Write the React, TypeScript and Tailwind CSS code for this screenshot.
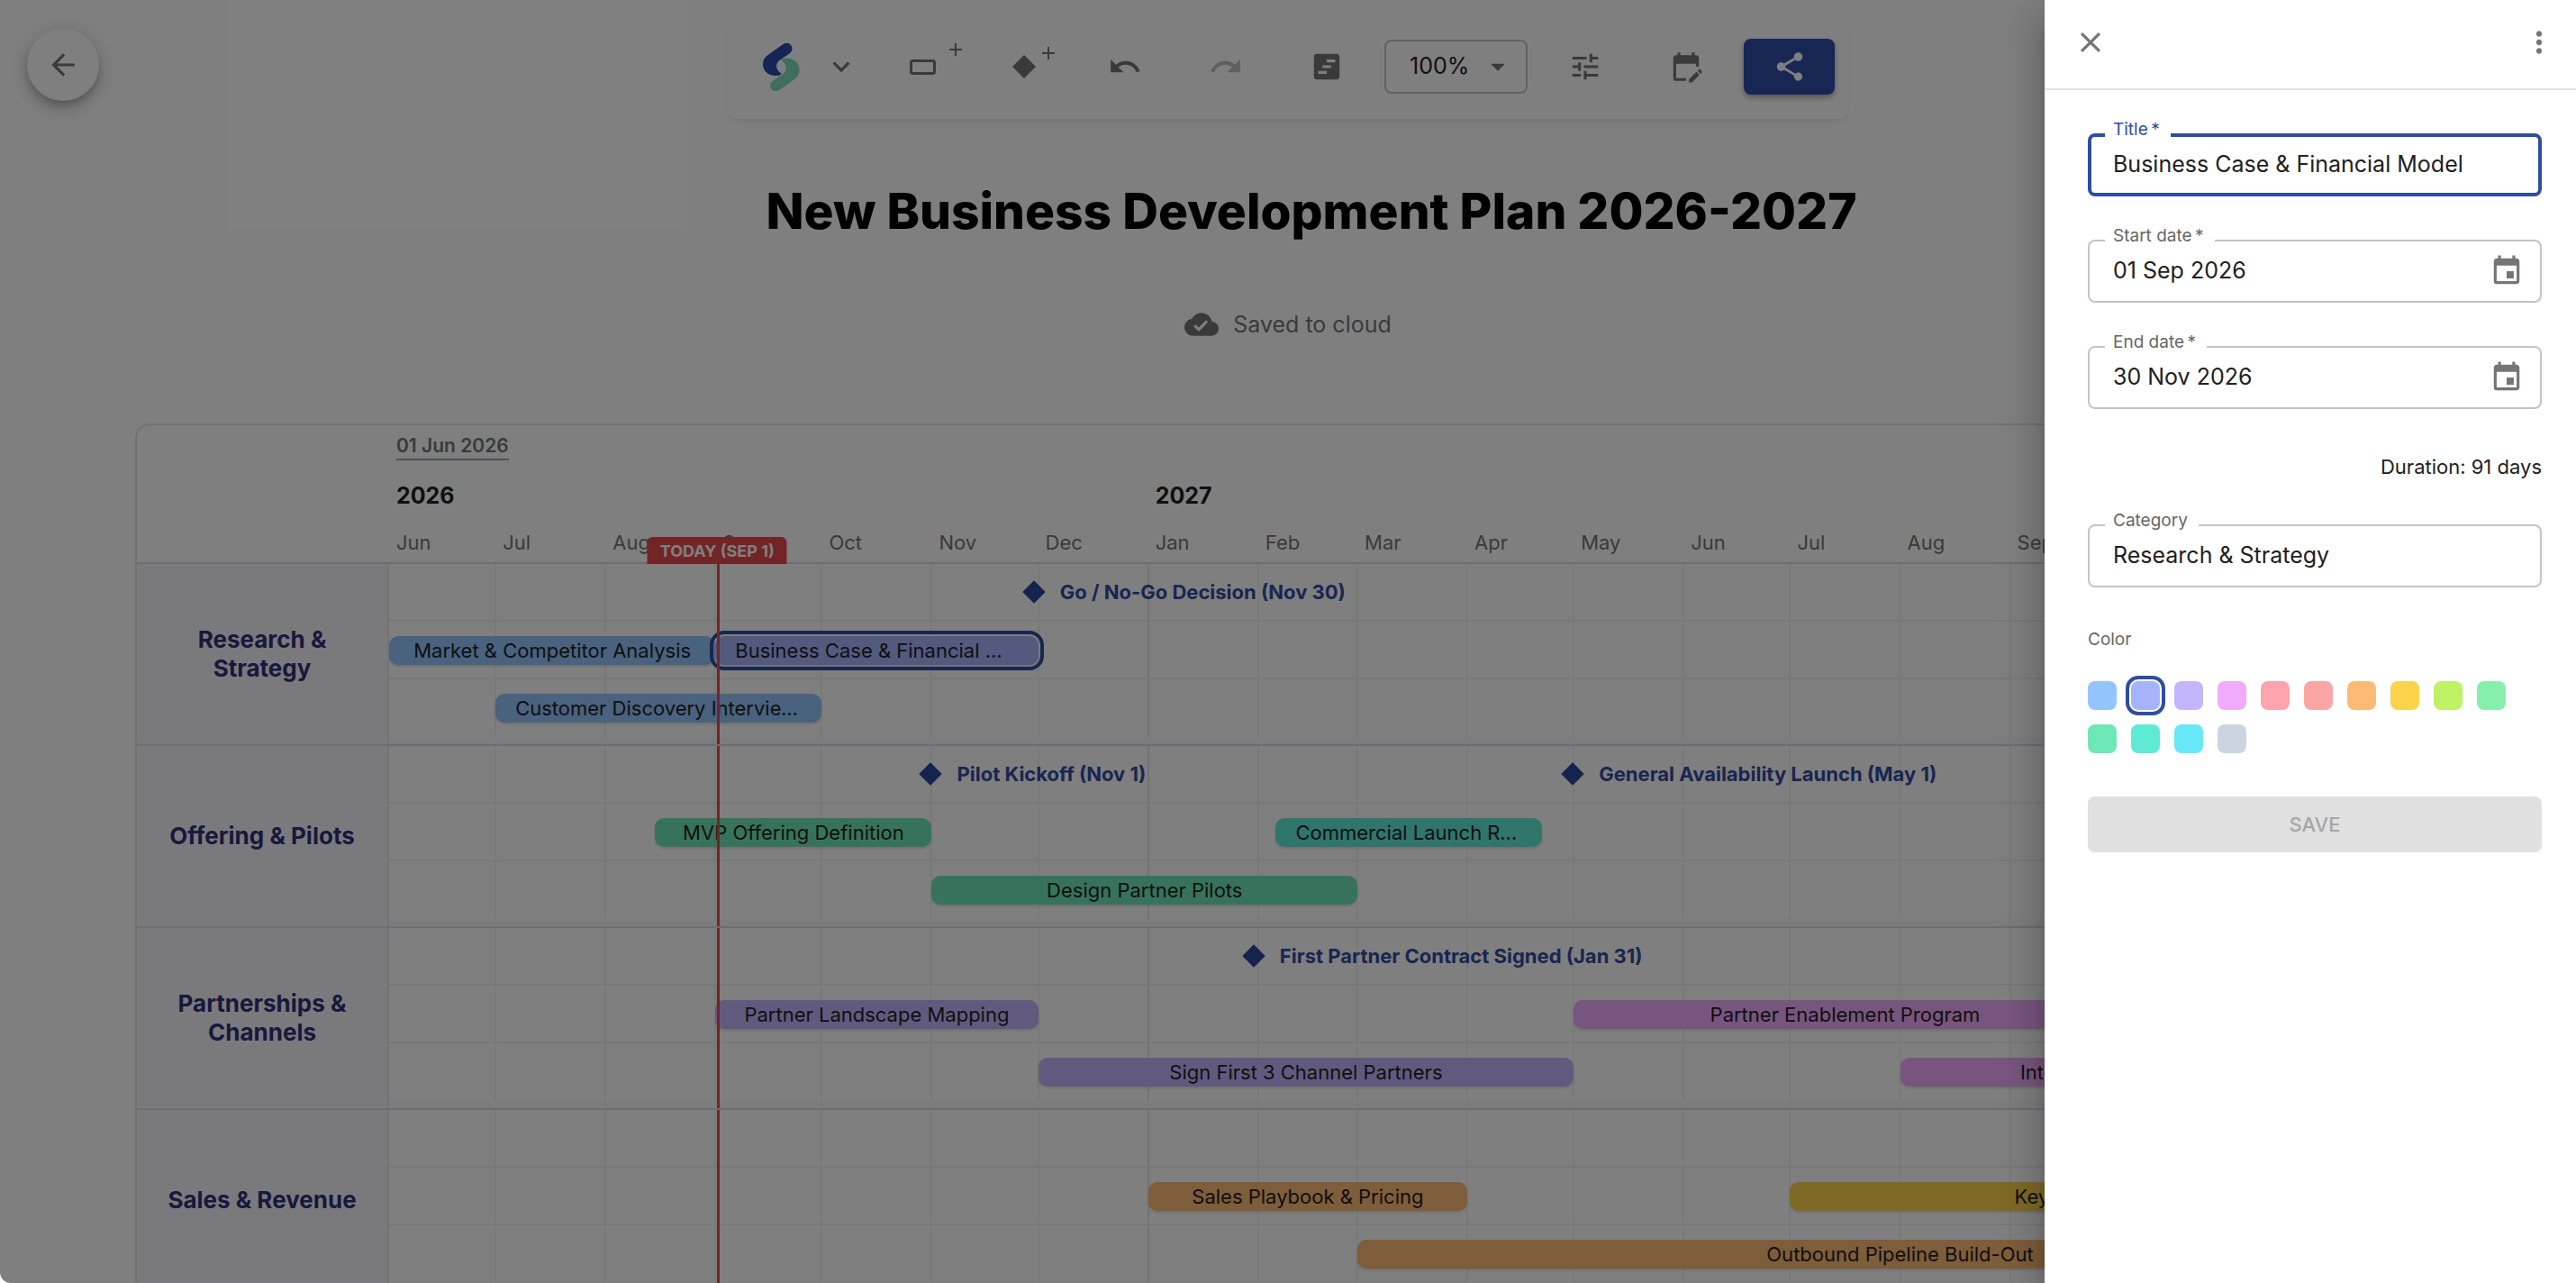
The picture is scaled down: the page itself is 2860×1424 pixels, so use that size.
import { useState } from 'react';
import type { ReactNode } from 'react';
import {
  MdArrowBack,
  MdArrowDropDown,
  MdClose,
  MdCloudDone,
  MdEditCalendar,
  MdEvent,
  MdExpandMore,
  MdMoreVert,
  MdRedo,
  MdShare,
  MdTune,
  MdUndo,
  MdViewTimeline,
} from 'react-icons/md';

const DAY = 86400000;
const START = Date.UTC(2026, 5, 1);
const TOTAL_DAYS = (Date.UTC(2028, 0, 1) - START) / DAY;

// position of a date on the time axis, in percent of its width
function pos(iso: string, extraDays = 0) {
  return (((Date.parse(iso) - START) / DAY + extraDays) / TOTAL_DAYS) * 100;
}

const MONTH_NAMES = ['Jan', 'Feb', 'Mar', 'Apr', 'May', 'Jun', 'Jul', 'Aug', 'Sep', 'Oct', 'Nov', 'Dec'];

const MONTHS = Array.from({ length: 19 }, (_, i) => {
  const month = (5 + i) % 12;
  const year = 2026 + Math.floor((5 + i) / 12);
  return {
    name: MONTH_NAMES[month],
    year,
    iso: `${year}-${String(month + 1).padStart(2, '0')}-01`,
    newYear: month === 0,
  };
});

interface Task {
  title: string;
  start: string;
  end: string;
  color: string;
  selected?: boolean;
}

interface Milestone {
  title: string;
  date: string;
}

interface Group {
  name: string;
  milestones: Milestone[];
  lanes: Task[][];
}

const GROUPS: Group[] = [
  {
    name: 'Research & Strategy',
    milestones: [{ title: 'Go / No-Go Decision (Nov 30)', date: '2026-11-30' }],
    lanes: [
      [
        { title: 'Market & Competitor Analysis', start: '2026-06-01', end: '2026-08-31', color: 'bg-[#93c5fd]' },
        {
          title: 'Business Case & Financial Model',
          start: '2026-09-01',
          end: '2026-11-30',
          color: 'bg-[#a5b4fc]',
          selected: true,
        },
      ],
      [{ title: 'Customer Discovery Interviews', start: '2026-07-01', end: '2026-09-30', color: 'bg-[#93c5fd]' }],
    ],
  },
  {
    name: 'Offering & Pilots',
    milestones: [
      { title: 'Pilot Kickoff (Nov 1)', date: '2026-11-01' },
      { title: 'General Availability Launch (May 1)', date: '2027-05-01' },
    ],
    lanes: [
      [
        { title: 'MVP Offering Definition', start: '2026-08-15', end: '2026-10-31', color: 'bg-[#6ee7b7]' },
        { title: 'Commercial Launch Readiness', start: '2027-02-06', end: '2027-04-21', color: 'bg-[#5eead4]' },
      ],
      [{ title: 'Design Partner Pilots', start: '2026-11-01', end: '2027-02-28', color: 'bg-[#6ee7b7]' }],
    ],
  },
  {
    name: 'Partnerships & Channels',
    milestones: [{ title: 'First Partner Contract Signed (Jan 31)', date: '2027-01-31' }],
    lanes: [
      [
        { title: 'Partner Landscape Mapping', start: '2026-09-01', end: '2026-11-30', color: 'bg-[#c4b5fd]' },
        { title: 'Partner Enablement Program', start: '2027-05-01', end: '2027-09-30', color: 'bg-[#f0abfc]' },
      ],
      [
        { title: 'Sign First 3 Channel Partners', start: '2026-12-01', end: '2027-04-30', color: 'bg-[#c4b5fd]' },
        { title: 'Integration Partners', start: '2027-08-01', end: '2027-11-28', color: 'bg-[#f0abfc]' },
      ],
    ],
  },
  {
    name: 'Sales & Revenue',
    milestones: [],
    lanes: [
      [
        { title: 'Sales Playbook & Pricing', start: '2027-01-01', end: '2027-03-31', color: 'bg-[#fdba74]' },
        { title: 'Key Account Program', start: '2027-07-01', end: '2027-12-31', color: 'bg-[#fcd34d]' },
      ],
      [{ title: 'Outbound Pipeline Build-Out', start: '2027-03-01', end: '2027-12-31', color: 'bg-[#fdba74]' }],
    ],
  },
];

const SWATCHES = [
  { name: 'Blue', className: 'bg-[#93c5fd]' },
  { name: 'Indigo', className: 'bg-[#a5b4fc]' },
  { name: 'Violet', className: 'bg-[#c4b5fd]' },
  { name: 'Fuchsia', className: 'bg-[#f0abfc]' },
  { name: 'Rose', className: 'bg-[#fda4af]' },
  { name: 'Red', className: 'bg-[#fca5a5]' },
  { name: 'Orange', className: 'bg-[#fdba74]' },
  { name: 'Amber', className: 'bg-[#fcd34d]' },
  { name: 'Lime', className: 'bg-[#bef264]' },
  { name: 'Green', className: 'bg-[#86efac]' },
  { name: 'Emerald', className: 'bg-[#6ee7b7]' },
  { name: 'Teal', className: 'bg-[#5eead4]' },
  { name: 'Cyan', className: 'bg-[#67e8f9]' },
  { name: 'Slate', className: 'bg-[#cbd5e1]' },
];

function LogoMark() {
  return (
    <svg viewBox="142 50 124 160" className="h-[53px] w-[41px]" aria-hidden="true">
      <path
        d="M197 207A18 18 0 0 1 174 177L207 154C225 145 225 120 202 106L211 102C242 95 265 115 265 140C265 152 259 163 249 170Z"
        fill="#7cdcbc"
      />
      <path
        d="M210 53A18 18 0 0 1 233 83L200 106C182 116 184 142 205 152L198 157C165 165 142 145 142 120C142 108 148 97 158 90Z"
        fill="#2b4bab"
      />
    </svg>
  );
}

function ToolButton({ label, disabled, children }: { label: string; disabled?: boolean; children: ReactNode }) {
  return (
    <button
      type="button"
      aria-label={label}
      disabled={disabled}
      className="flex h-16 w-24 items-center justify-center text-[38px] text-[#757575] disabled:text-[#bdbdbd]"
    >
      {children}
    </button>
  );
}

function Toolbar() {
  return (
    <div className="mx-auto mt-4 flex h-29 w-fit items-center gap-4 rounded-xl bg-white px-4 shadow-[0_5px_6px_-3px_rgba(0,0,0,0.12)]">
      <button type="button" aria-label="Menu" className="flex h-16 items-center gap-[27px] pr-2 pl-6 text-[38px] text-[#757575]">
        <LogoMark />
        <MdExpandMore />
      </button>
      <ToolButton label="Add task">
        <svg viewBox="0 0 96 64" className="h-16 w-24" fill="none" stroke="currentColor" aria-hidden="true">
          <rect x="34.500" y="25.500" width="26" height="14" rx="2" strokeWidth="3" />
          <path d="M77 13h14M84 6v14" strokeWidth="2" />
        </svg>
      </ToolButton>
      <ToolButton label="Add milestone">
        <svg viewBox="0 0 96 64" className="h-16 w-24" aria-hidden="true">
          <path d="M48 19l13 13-13 13-13-13z" fill="currentColor" />
          <path d="M68 17h14M75 10v14" stroke="currentColor" strokeWidth="2" />
        </svg>
      </ToolButton>
      <ToolButton label="Undo">
        <MdUndo />
      </ToolButton>
      <ToolButton label="Redo" disabled>
        <MdRedo />
      </ToolButton>
      <ToolButton label="Timeline view">
        <MdViewTimeline />
      </ToolButton>
      <div className="relative">
        <select
          aria-label="Zoom"
          defaultValue="100%"
          className="h-[60px] w-[159px] appearance-none rounded-lg border-2 border-[#c4c4c4] bg-transparent pl-[26px] text-[25px] text-[#212121]"
        >
          <option>50%</option>
          <option>100%</option>
          <option>150%</option>
        </select>
        <MdArrowDropDown className="pointer-events-none absolute top-[11px] right-[14px] text-[38px] text-[#757575]" />
      </div>
      <ToolButton label="Settings">
        <MdTune />
      </ToolButton>
      <ToolButton label="Edit dates">
        <MdEditCalendar />
      </ToolButton>
      <button
        type="button"
        aria-label="Share"
        className="flex h-[62px] w-[101px] items-center justify-center rounded-lg bg-[#304ca8] text-[38px] text-white shadow-[0_3px_6px_rgba(0,0,0,0.35)]"
      >
        <MdShare />
      </button>
    </div>
  );
}

function TimelineHeader() {
  return (
    <div className="flex h-[154px] border-b-2 border-[#dcdee6]">
      <div className="w-70 shrink-0" />
      <div className="relative flex-1">
        <div className="flex h-12 items-center pl-2">
          <button type="button" className="border-b-2 border-[#a0a4a8] text-[21px] leading-7 font-semibold text-[#757575]">
            01 Jun 2026
          </button>
        </div>
        <div className="relative h-15 text-[25px] leading-15 font-bold text-[#212121]">
          {MONTHS.filter((m, i) => i === 0 || m.newYear).map((m) => (
            <span key={m.year} className="absolute pl-2" style={{ left: `${pos(m.iso)}%` }}>
              {m.year}
            </span>
          ))}
        </div>
        <div className="relative h-11 text-[22px] leading-11 text-[#757575]">
          {MONTHS.map((m) => (
            <span key={m.iso} className="absolute pl-2" style={{ left: `${pos(m.iso)}%` }}>
              {m.name}
            </span>
          ))}
        </div>
        <div
          className="absolute -bottom-0.5 flex h-[30px] -translate-x-1/2 items-center rounded-t-md bg-[#e5484d] px-3.5 text-[18px] font-bold whitespace-nowrap text-white"
          style={{ left: `${pos('2026-09-01', 0.5)}%` }}
        >
          TODAY (SEP 1)
        </div>
      </div>
    </div>
  );
}

function TaskBar({ task }: { task: Task }) {
  const left = pos(task.start);
  return (
    <button
      type="button"
      className={`absolute top-4 h-8 truncate rounded-[10px] px-[22px] text-center text-[22px] leading-8 text-[#212121] shadow-[0_2px_3px_rgba(0,0,0,0.12)] ${task.color} ${
        task.selected ? 'z-10 outline-4 outline-offset-2 outline-[#2e4ea1]' : ''
      }`}
      style={{ left: `${left}%`, width: `${pos(task.end, 1) - left}%` }}
    >
      {task.title}
    </button>
  );
}

function GroupRow({ group }: { group: Group }) {
  return (
    <div className="flex border-b-2 border-[#dadce6]">
      <div className="flex w-70 shrink-0 items-center justify-center border-r-2 border-[#e8e8f0] bg-[#f5f5fa] px-8 text-center text-[26px] leading-8 font-bold text-[#2f3278]">
        {group.name}
      </div>
      <div className="relative flex-1">
        {MONTHS.slice(1).map((m) => (
          <div
            key={m.iso}
            className={`absolute inset-y-0 w-0.5 -translate-x-1/2 ${m.newYear ? 'bg-[#e4e6ea]' : 'bg-[#f2f2f4]'}`}
            style={{ left: `${pos(m.iso)}%` }}
          />
        ))}
        <div className="relative h-16 border-b-2 border-[#f0f0f2]">
          {group.milestones.map((m) => (
            <div
              key={m.title}
              className="absolute inset-y-0 flex items-center gap-5 text-[22px] font-bold whitespace-nowrap text-[#304ca3]"
              style={{ left: `${pos(m.date)}%` }}
            >
              <span className="-ml-2.5 size-[18px] rotate-45 bg-[#2b489c]" />
              {m.title}
            </div>
          ))}
        </div>
        {group.lanes.map((lane, i) => (
          <div key={i} className={i === 0 ? 'relative h-16 border-b-2 border-[#f0f0f2]' : 'relative h-16'}>
            {lane.map((task) => (
              <TaskBar key={task.title} task={task} />
            ))}
          </div>
        ))}
        <div className="relative h-2 bg-[#f9f9fd]" />
        <div className="absolute inset-y-0 z-20 w-[3px] bg-[#ef4444]" style={{ left: `${pos('2026-09-01', 0.5)}%` }} />
      </div>
    </div>
  );
}

interface FieldProps {
  id: string;
  label: string;
  value: string;
  onChange?: (value: string) => void;
  required?: boolean;
  active?: boolean;
  withCalendar?: boolean;
}

function Field({ id, label, value, onChange, required, active, withCalendar }: FieldProps) {
  return (
    <div
      className={`relative flex h-[70px] items-center rounded-lg ${
        active ? 'border-4 border-[#2e4ea1] px-6' : 'border-2 border-[#c4c4c4] px-[26px]'
      }`}
    >
      <label
        htmlFor={id}
        className={`absolute h-6 bg-white pr-3 pl-[9px] text-[19px] leading-6 whitespace-nowrap ${
          active ? '-top-5 left-[15px] text-[#2e4ea1]' : '-top-[18px] left-[17px] text-[#666666]'
        }`}
      >
        {label}
        {required && <span aria-hidden="true">{'\u2009*'}</span>}
      </label>
      <input
        id={id}
        value={value}
        onChange={(e) => onChange?.(e.target.value)}
        className="min-w-0 flex-1 bg-transparent text-[25px] text-[#212121] outline-none"
      />
      {withCalendar && (
        <button type="button" aria-label={`Choose ${label.toLowerCase()}`} className="-mr-2 text-[38px] text-[#757575]">
          <MdEvent />
        </button>
      )}
    </div>
  );
}

function TaskDrawer() {
  const [title, setTitle] = useState('Business Case & Financial Model');
  const [startDate, setStartDate] = useState('01 Sep 2026');
  const [endDate, setEndDate] = useState('30 Nov 2026');
  const [category, setCategory] = useState('Research & Strategy');
  const [color, setColor] = useState('Indigo');

  return (
    <aside className="absolute inset-y-0 right-0 z-40 w-[590px] bg-white shadow-[0_13px_16px_-8px_rgba(0,0,0,0.2),0_26px_38px_3px_rgba(0,0,0,0.14),0_10px_48px_8px_rgba(0,0,0,0.12)]">
      <div className="flex h-[100px] items-center justify-between border-b-2 border-[#e0e0e0] pr-[22px] pb-1 pl-8 text-[38px] text-[#757575]">
        <button type="button" aria-label="Close">
          <MdClose />
        </button>
        <button type="button" aria-label="More options">
          <MdMoreVert />
        </button>
      </div>
      <form className="flex flex-col pt-12 pr-[38px] pl-12" onSubmit={(e) => e.preventDefault()}>
        <div className="flex flex-col gap-12">
          <Field id="title" label="Title" value={title} onChange={setTitle} required active />
          <Field id="start" label="Start date" value={startDate} onChange={setStartDate} required withCalendar />
          <Field id="end" label="End date" value={endDate} onChange={setEndDate} required withCalendar />
          <p className="text-right text-[22px] leading-8 text-[#212121]">Duration: 91 days</p>
          <Field id="category" label="Category" value={category} onChange={setCategory} />
        </div>
        <fieldset className="mt-11">
          <legend className="text-[19px] leading-7 text-[#666666]">Color</legend>
          <div className="mt-8 flex flex-wrap gap-4">
            {SWATCHES.map((s) => (
              <input
                key={s.name}
                type="radio"
                name="color"
                aria-label={s.name}
                checked={color === s.name}
                onChange={() => setColor(s.name)}
                className={`size-8 appearance-none rounded-lg outline-offset-2 outline-[#2e4ea1] checked:outline-4 ${s.className}`}
              />
            ))}
          </div>
        </fieldset>
        <button
          type="submit"
          disabled
          className="mt-12 h-[62px] rounded-lg bg-[#e0e0e0] text-[22px] font-medium text-[#a6a6a6]"
        >
          SAVE
        </button>
      </form>
    </aside>
  );
}

export default function App() {
  return (
    <div className="relative h-screen overflow-hidden rounded-bl-xl bg-white font-['Inter',sans-serif]">
      <button
        type="button"
        aria-label="Back"
        className="absolute top-8 left-[30px] flex size-20 items-center justify-center rounded-full bg-white text-[38px] text-[#757575] shadow-[0_5px_8px_-2px_rgba(0,0,0,0.2),0_10px_16px_rgba(0,0,0,0.14),0_2px_29px_rgba(0,0,0,0.12)]"
      >
        <MdArrowBack />
      </button>
      <main className="flex flex-col">
        <Toolbar />
        <h1 className="mt-[62px] pl-13 text-center text-[55px] leading-20 font-extrabold text-black">
          New Business Development Plan 2026-2027
        </h1>
        <div className="mt-[66px] flex items-center justify-center gap-4 text-[25px] leading-10 text-[#757575]">
          <MdCloudDone className="text-[38px]" />
          Saved to cloud
        </div>
        <section className="mt-[90px] mr-[146px] ml-[150px] rounded-t-2xl border-2 border-b-0 border-[#e0e2e6]">
          <TimelineHeader />
          {GROUPS.map((group) => (
            <GroupRow key={group.name} group={group} />
          ))}
        </section>
      </main>
      <div className="absolute inset-0 z-30 bg-black/50" />
      <TaskDrawer />
    </div>
  );
}
